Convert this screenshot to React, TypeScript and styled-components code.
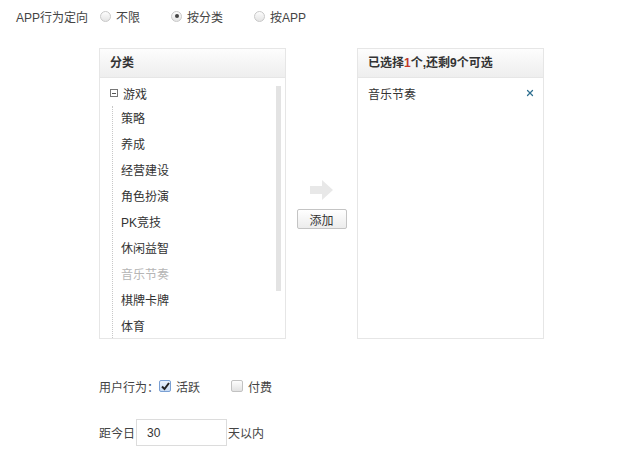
import { FC } from 'react'
import styled, { createGlobalStyle } from 'styled-components'
import { X } from 'lucide-react'

const categories = ['策略', '养成', '经营建设', '角色扮演', 'PK竞技', '休闲益智', '音乐节奏', '棋牌卡牌', '体育']
const selected = ['音乐节奏']

const GlobalStyle = createGlobalStyle`
   body {
      margin: 0;
      background: #fff;
      color: #333;
      font-family: 'Liberation Sans', 'Noto Sans CJK SC', sans-serif;
      font-size: 12px;
   }
`

const App: FC = () => (
   <Page>
      <GlobalStyle />
      <TargetRow>
         <RowLabel>APP行为定向</RowLabel>
         <RadioOption>
            <Radio />
            不限
         </RadioOption>
         <RadioOption>
            <Radio checked />
            按分类
         </RadioOption>
         <RadioOption>
            <Radio />
            按APP
         </RadioOption>
      </TargetRow>

      <Transfer>
         <Panel>
            <PanelHeader>分类</PanelHeader>
            <TreeBody>
               <RootRow>
                  <Toggle />
                  游戏
               </RootRow>
               <ChildList>
                  {categories.map((name) => (
                     <TreeItem key={name} disabled={selected.includes(name)}>
                        {name}
                     </TreeItem>
                  ))}
               </ChildList>
               <ScrollThumb />
            </TreeBody>
         </Panel>

         <Middle>
            <svg width='23' height='20' viewBox='0 0 23 20'>
               <path d='M0 6h12V0l11 10-11 10v-6H0z' fill='#e8e8e8' />
            </svg>
            <AddButton>添加</AddButton>
         </Middle>

         <Panel>
            <PanelHeader>
               已选择<Count>1</Count>个,还剩9个可选
            </PanelHeader>
            <SelectedList>
               {selected.map((name) => (
                  <SelectedItem key={name}>
                     {name}
                     <X size={10} strokeWidth={3} color='#2f7090' />
                  </SelectedItem>
               ))}
            </SelectedList>
         </Panel>
      </Transfer>

      <Behaviour>
         <FormRow>
            用户行为：
            <CheckOption>
               <CheckBox checked>
                  <svg width='9' height='9' viewBox='0 0 9 9'>
                     <path d='M1 4.5l2.5 2.5L8 1' stroke='#222' strokeWidth='2' fill='none' />
                  </svg>
               </CheckBox>
               活跃
            </CheckOption>
            <CheckOption>
               <CheckBox />
               付费
            </CheckOption>
         </FormRow>
         <DaysRow>
            距今日
            <DaysInput defaultValue='30' />
            天以内
         </DaysRow>
      </Behaviour>
   </Page>
)

const Page = styled.div`
   padding: 9px 0 20px 16px;
`

const TargetRow = styled.div`
   display: flex;
   align-items: center;
   height: 14px;
   color: #444;
`

const RowLabel = styled.span`
   margin-right: 12px;
`

const RadioOption = styled.label`
   display: flex;
   align-items: center;
   gap: 5px;
   margin-right: 31px;
   color: #444;
`

const Radio = styled.span<{ checked?: boolean }>`
   position: relative;
   width: 11px;
   height: 11px;
   box-sizing: border-box;
   border-radius: 50%;
   border: 1px solid #c8c8c8;
   background: linear-gradient(#fdfdfd, #e4e4e4);

   &::after {
      content: '';
      display: ${(p) => (p.checked ? 'block' : 'none')};
      position: absolute;
      top: 2.5px;
      left: 2.5px;
      width: 4px;
      height: 4px;
      border-radius: 50%;
      background: #444;
   }
`

const Transfer = styled.div`
   display: flex;
   margin: 25px 0 0 83px;
`

const Panel = styled.div`
   width: 187px;
   height: 291px;
   box-sizing: border-box;
   border: 1px solid #e6e6e6;
   background: #fff;
   overflow: hidden;
`

const PanelHeader = styled.div`
   height: 28px;
   line-height: 28px;
   padding-left: 10px;
   font-weight: bold;
   color: #333;
   background: linear-gradient(#fdfdfd, #eeeeee);
   border-bottom: 1px solid #e6e6e6;
`

const Count = styled.span`
   color: #c0392b;
`

const TreeBody = styled.div`
   position: relative;
   height: 261px;
   padding: 2px 0 0 10px;
   overflow: hidden;
`

const RootRow = styled.div`
   display: flex;
   align-items: center;
   gap: 5px;
   height: 26px;
   color: #333;
`

const Toggle = styled.span`
   position: relative;
   width: 8px;
   height: 8px;
   box-sizing: border-box;
   border: 1px solid #777;

   &::after {
      content: '';
      position: absolute;
      left: 1px;
      right: 1px;
      top: 2.5px;
      height: 1px;
      background: #555;
   }
`

const ChildList = styled.div`
   margin-left: 2px;
   border-left: 1px dotted #c8c8c8;
`

const TreeItem = styled.div<{ disabled?: boolean }>`
   height: 26px;
   line-height: 26px;
   padding-left: 8px;
   color: ${(p) => (p.disabled ? '#b5b5b5' : '#333')};
`

const ScrollThumb = styled.div`
   position: absolute;
   top: 8px;
   left: 176px;
   width: 5px;
   height: 205px;
   background: #e3e3e3;
`

const Middle = styled.div`
   width: 71px;
   display: flex;
   flex-direction: column;
   align-items: center;
   gap: 9px;
   padding-top: 132px;
`

const AddButton = styled.button`
   width: 50px;
   height: 20px;
   padding: 0;
   border: 1px solid #c4c4c4;
   border-radius: 2px;
   background: linear-gradient(#ffffff, #ececec);
   font-family: inherit;
   font-size: 12px;
   color: #333;
`

const SelectedList = styled.div`
   padding: 2px 8px 0 10px;
`

const SelectedItem = styled.div`
   display: flex;
   align-items: center;
   justify-content: space-between;
   height: 26px;
   color: #333;
`

const Behaviour = styled.div`
   margin: 40px 0 0 83px;
`

const FormRow = styled.div`
   display: flex;
   align-items: center;
   height: 14px;
   color: #444;
`

const CheckOption = styled.label`
   display: flex;
   align-items: center;
   gap: 5px;
   margin-right: 31px;
   color: #444;
`

const CheckBox = styled.span<{ checked?: boolean }>`
   display: flex;
   align-items: center;
   justify-content: center;
   width: 12px;
   height: 12px;
   box-sizing: border-box;
   border-radius: 2px;
   border: 1px solid ${(p) => (p.checked ? '#7aa0d4' : '#c2c2c2')};
   background: ${(p) => (p.checked ? 'linear-gradient(#eaf2fc, #c9dcf4)' : 'linear-gradient(#fdfdfd, #e2e2e2)')};
`

const DaysRow = styled.div`
   display: flex;
   align-items: center;
   gap: 1px;
   margin-top: 26px;
   color: #444;
`

const DaysInput = styled.input`
   width: 91px;
   height: 27px;
   box-sizing: border-box;
   padding: 0 0 0 10px;
   border: 1px solid #dcdcdc;
   outline: none;
   font-family: inherit;
   font-size: 12px;
   color: #333;
`

export default App
